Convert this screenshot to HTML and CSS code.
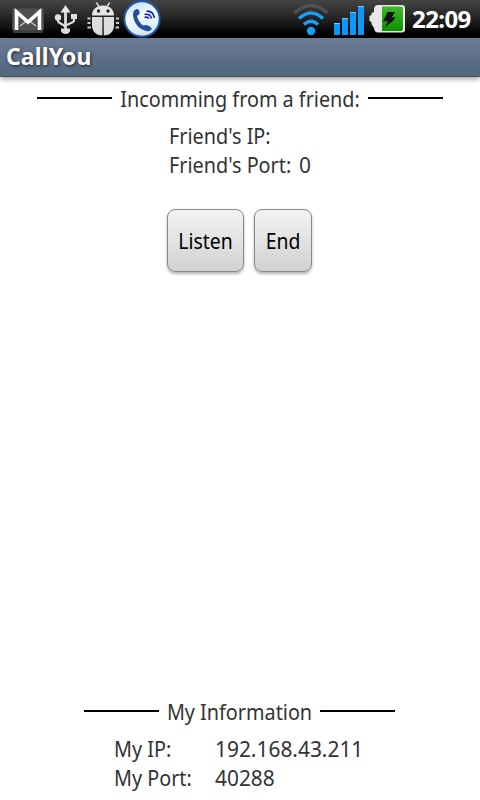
FILE: index.html
```html
<!DOCTYPE html>
<html lang="en">
<head>
  <meta charset="UTF-8" />
  <meta name="viewport" content="width=device-width, initial-scale=1.0" />
  <title>CallYou</title>
  <link rel="stylesheet" href="styles.css">
</head>
<body>
  <!-- Status bar -->
  <div class="status-bar">
    <div class="notifications">
      <svg class="icon-mail" width="32" height="38" viewBox="0 0 32 38">
        <rect x="0.5" y="8.5" width="31" height="22" rx="1" fill="#505050" stroke="#444" />
        <path d="M1 32h30" stroke="#777" />
        <path d="M8 26l6-4.500M24 26l-6-4.500" stroke="#ccc" stroke-width="1.200" />
        <path d="M4.500 30V12L16 22l11.500-10V30" fill="none" stroke="#fff" stroke-width="3.600" />
      </svg>
      <svg class="icon-usb" width="24" height="38" viewBox="0 0 24 38">
        <g fill="none" stroke="#ddd" stroke-width="2.200">
          <path d="M12.500 10v20" stroke-width="2.800" />
          <path d="M5 18v2.500q0 2 2 2.500l5.500 3.500M21 17v3q0 2-2 2.500L12.500 25.500" />
        </g>
        <path d="M12.500 5l5 7.500h-10z" fill="#e8e8e8" />
        <circle cx="5" cy="17.500" r="3.200" fill="#e0e0e0" />
        <rect x="18" y="14" width="6" height="5" fill="#e0e0e0" />
        <path d="M8 28.500h9v2.500q-1 3-4.500 3T8 31z" fill="#ddd" />
      </svg>
      <svg class="icon-debug" width="34" height="38" viewBox="0 0 34 38">
        <path d="M10.500 3l3 4M23.500 3l-3 4" stroke="#ddd" stroke-width="1.400" stroke-linecap="round" />
        <path d="M6 15.500C6 9 11 5.500 17 5.500s11 3.500 11 10z" fill="#e6e6e6" />
        <circle cx="12.500" cy="11" r="1.700" fill="#222" />
        <circle cx="22" cy="11" r="1.700" fill="#222" />
        <path d="M6 17h10.400V35.500C9.500 35.500 6 31 6 25zM17.700 17H28V25c0 6-3.500 10.500-10.300 10.500z" fill="#ddd" />
        <path d="M1.500 18.500h3M1.500 23h3M1.500 27.500h3.500M30 18.500h3M30 23h3M29.500 27.500h3.500" stroke="#ccc" stroke-width="2" />
      </svg>
      <svg class="icon-call" width="38" height="38" viewBox="0 0 38 38">
        <defs>
          <linearGradient id="callFace" x1="0" y1="0" x2="0.300" y2="1">
            <stop offset="0" stop-color="#b9def0" />
            <stop offset="0.500" stop-color="#f4fbff" />
            <stop offset="1" stop-color="#d5ebf7" />
          </linearGradient>
        </defs>
        <circle cx="19" cy="19" r="17.700" fill="url(#callFace)" stroke="#2454a8" stroke-width="2" />
        <path d="M10.500 11.500q1.500-3 4.500-2.500 2 1.500 1.500 5l-2.500 2q1.500 6 6 9.500l3-.5q4 .5 6 4-2 3-6 2Q13.500 28.500 10.500 18.500q-1-4 0-7z" fill="#2450a0" />
        <g fill="none" stroke="#1b1fb8" stroke-width="1.600">
          <path d="M21.500 17.500q3-1.300 4.300 1.200" />
          <path d="M21.500 14.500q5.500-1.500 7 4" />
          <path d="M23.500 11.200q6.500-.5 8 6.800" />
        </g>
      </svg>
    </div>
    <div class="system">
      <svg class="icon-wifi" width="36" height="38" viewBox="0 0 36 38">
        <g fill="none" stroke-width="3.400">
          <path d="M1.300 13Q18-2 34.700 13" stroke="#505050" />
          <path d="M6 18.500q12-11 24 0" stroke="#18a0f5" />
          <path d="M11 24.500q7-6.500 14 0" stroke="#18a0f5" />
        </g>
        <circle cx="18" cy="31" r="4.200" fill="#18a0f5" />
      </svg>
      <svg class="icon-signal" width="32" height="38" viewBox="0 0 32 38">
        <g fill="#0c98fa">
          <rect x="1" y="23" width="6" height="12" />
          <rect x="9" y="18" width="6" height="17" />
          <rect x="17" y="12" width="6" height="23" />
          <rect x="25" y="6" width="6" height="29" />
        </g>
        <path d="M1 23.500h6M9 18.500h6M17 12.500h6M25 6.500h6" stroke="#7cc8fc" />
      </svg>
      <svg class="icon-battery" width="37" height="38" viewBox="0 0 37 38">
        <defs>
          <linearGradient id="charge" x1="0" y1="0" x2="0" y2="1">
            <stop offset="0" stop-color="#45b52c" />
            <stop offset="1" stop-color="#0b9200" />
          </linearGradient>
        </defs>
        <path d="M9 5h24q3 0 3 3v21.500q0 3-3 3H9q-3.500 0-4-4.500L2.500 24v-2L.5 21v-5l2-1v-2L5 12V9q.5-4 4-4z" fill="#e8e8e8" />
        <path d="M13 6.500H32q2 0 2 2v20.500q0 2-2 2H13z" fill="url(#charge)" />
        <path d="M18.500 12h7.500l-3.500 5.500 4-.5-2 3.500-8.500 6.500 3-6-5 .5z" fill="#111" />
      </svg>
      <span class="clock">22:09</span>
    </div>
  </div>

  <div class="title-bar"><h1>CallYou</h1></div>

  <div class="content">
    <!-- Incoming call -->
    <div class="heading heading-friend">
      <span class="line"></span>
      <h2>Incomming from a friend:</h2>
      <span class="line"></span>
    </div>
    <div class="info friend-info">
      <span class="label">Friend's IP:</span><span></span>
      <span class="label">Friend's Port:</span><span class="value">0</span>
    </div>
    <div class="buttons">
      <button class="listen"><span>Listen</span></button>
      <button class="end"><span>End</span></button>
    </div>

    <!-- Own address -->
    <div class="my-section">
      <div class="heading heading-my">
        <span class="line"></span>
        <h2>My Information</h2>
        <span class="line"></span>
      </div>
      <div class="info my-info">
        <span class="label">My IP:</span><span class="value">192.168.43.211</span>
        <span class="label">My Port:</span><span class="value">40288</span>
      </div>
    </div>
  </div>
</body>
</html>
```

FILE: styles.css
```css
body {
  margin: 0;
  height: 800px;
  display: flex;
  flex-direction: column;
  overflow: hidden;
  font-family: "Noto Sans", sans-serif;
  font-size: 22px;
  line-height: 29px;
  color: #333;
  background: #fff;
}
h1, h2 {
  margin: 0;
}
/* Status bar */
.status-bar {
  height: 38px;
  display: flex;
  justify-content: space-between;
  background: linear-gradient(#444, #222 50%, #000 90%);
}
.notifications, .system {
  display: flex;
}
.notifications {
  padding-left: 12px;
}
.icon-usb {
  margin-left: 9px;
}
.icon-debug {
  margin-left: 9px;
}
.icon-call {
  margin-left: 3px;
}
.icon-signal {
  margin-left: 4px;
}
.icon-battery {
  margin-left: 4px;
}
.clock {
  width: 68px;
  margin-left: 6px;
  font-size: 24px;
  font-weight: bold;
  line-height: 38px;
  letter-spacing: -0.6px;
  color: #fff;
  white-space: nowrap;
}
/* Title bar */
.title-bar {
  height: 39px;
  box-sizing: border-box;
  padding-left: 6px;
  border-bottom: 1px solid #4c5157;
  background: linear-gradient(#6c7c94, #50657e);
  box-shadow: 0 1px 6px rgba(0, 0, 0, 0.5);
}
.title-bar h1 {
  font-size: 23px;
  line-height: 36px;
  letter-spacing: 0.1px;
  color: #fff;
  text-shadow: 1px 1px 3px #222;
}
/* Content */
.content {
  flex: 1;
  display: flex;
  flex-direction: column;
  align-items: center;
  padding-top: 7px;
}
.heading {
  display: flex;
  justify-content: center;
  align-items: center;
}
/* Condensed text */
.heading h2, .label, .value, button span {
  transform: scaleX(0.9);
}
.heading h2 {
  flex: 1;
  display: flex;
  justify-content: center;
  min-width: 0;
  font-size: 22px;
  font-weight: normal;
  white-space: nowrap;
}
.heading-friend {
  width: 406px;
}
.heading-my {
  width: 311px;
  margin-right: 1px;
}
.line {
  width: 75px;
  height: 2px;
  margin-bottom: 1px;
  background: #000;
}
.info {
  display: grid;
  grid-auto-rows: 29px;
  margin-top: 8px;
  white-space: nowrap;
}
.label, .value {
  transform-origin: left;
}
.value {
  transform: scaleX(0.95);
}
.friend-info {
  width: 142px;
  grid-template-columns: 130px 1fr;
}
.my-info {
  width: 252px;
  grid-template-columns: 101px 1fr;
}
.buttons {
  display: flex;
  gap: 10px;
  margin-top: 30px;
  margin-right: 2px;
}
button {
  height: 63px;
  padding: 0 0 1px;
  border: 1px solid #888;
  border-radius: 8px;
  font-family: inherit;
  font-size: 22px;
  color: #000;
  background: linear-gradient(#f3f3f3, #d1d1d1);
  box-shadow: 0 2px 3px rgba(0, 0, 0, 0.3);
}
button span {
  display: block;
  transform: scaleX(0.88);
}
.listen {
  width: 77px;
}
.end {
  width: 58px;
}
.my-section {
  display: flex;
  flex-direction: column;
  align-items: center;
  margin-top: auto;
  padding-bottom: 8px;
}
```
